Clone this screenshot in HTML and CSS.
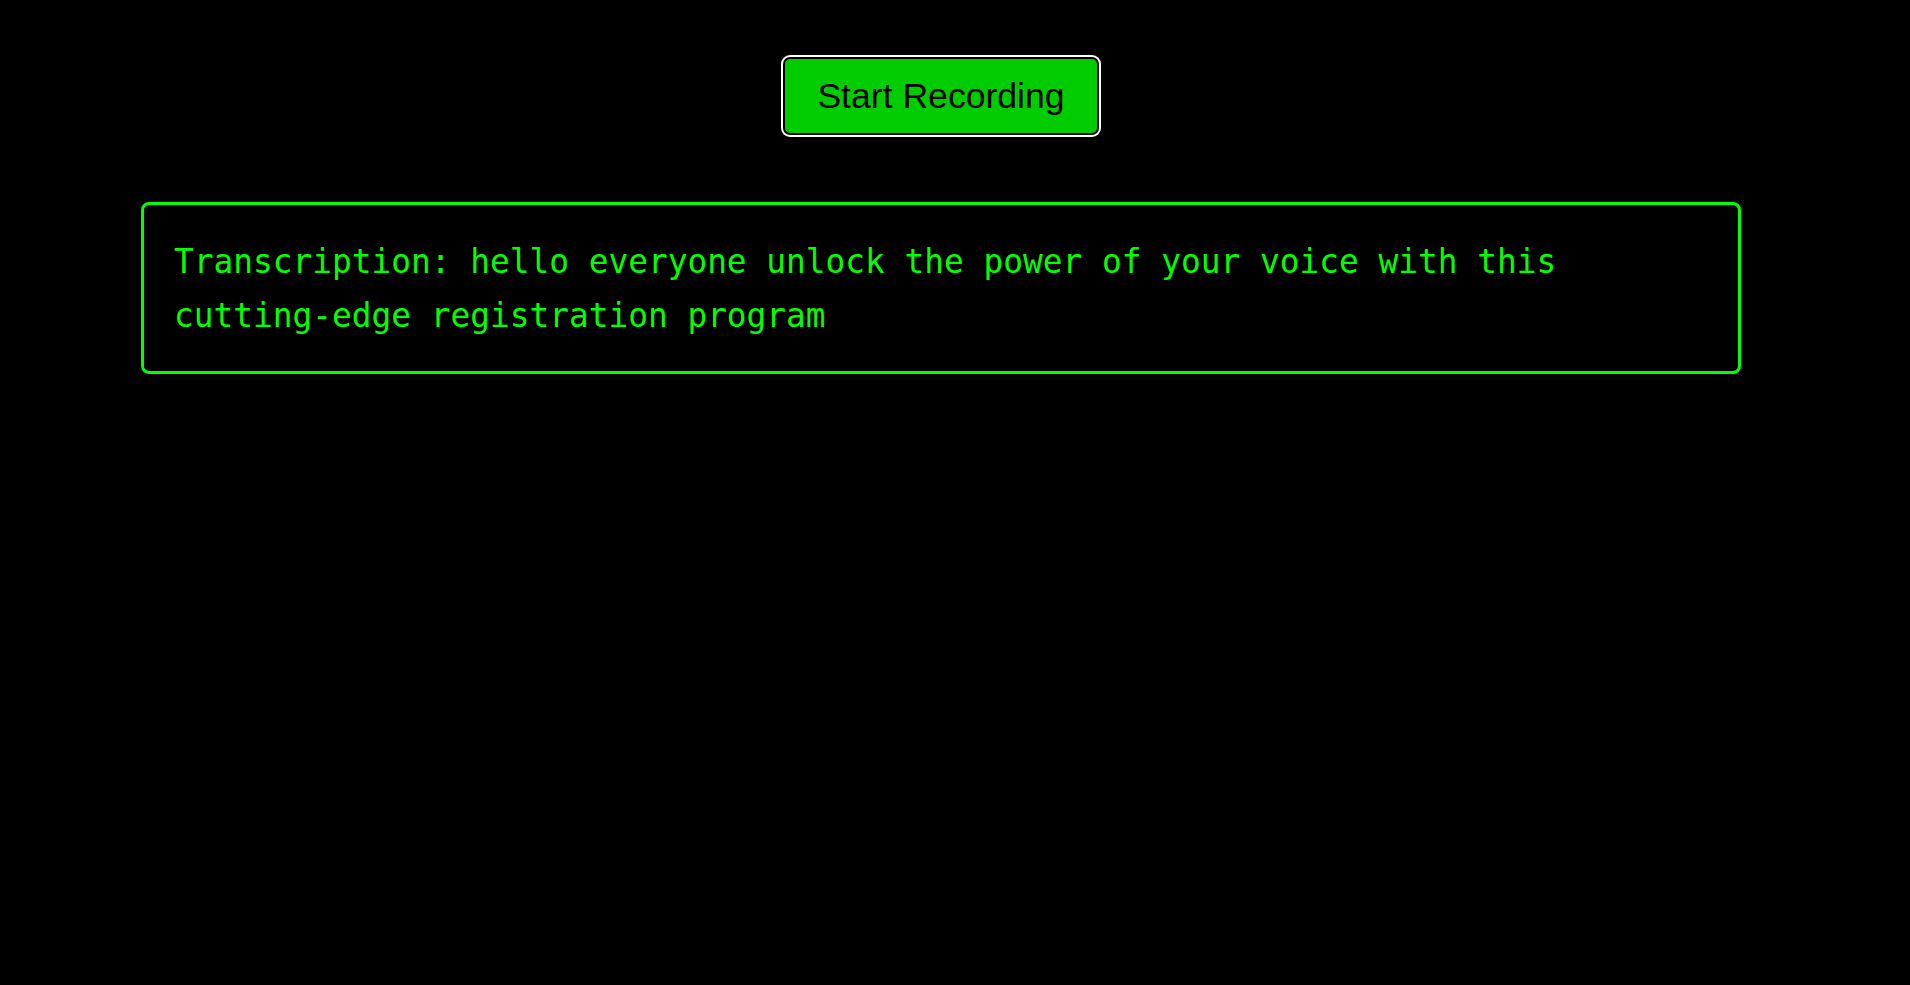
FILE: index.html
```html
<!DOCTYPE html>
<html lang="en">
<head>
<meta charset="utf-8">
<title>Speech to Text</title>
<link rel="stylesheet" href="styles.css">
</head>
<body>
<main class="page">
  <button class="record-btn" type="button">Start Recording</button>
  <div class="transcript">Transcription: hello everyone unlock the power of your voice with this cutting-edge registration program</div>
</main>
</body>
</html>
```

FILE: styles.css
```css
html, body {
  margin: 0;
  padding: 0;
  background: #000;
  height: 100%;
}
.page {
  width: 1882px;
  display: flex;
  flex-direction: column;
  align-items: center;
  padding-top: 57px;
}
.record-btn {
  font-family: "Liberation Sans", Arial, sans-serif;
  font-size: 35.6px;
  line-height: 41px;
  color: #000;
  background: #00cc00;
  border: 2px solid #000;
  border-radius: 7px;
  box-shadow: 0 0 0 2px #fff;
  padding: 16px 31px;
  width: 316px;
  height: 78px;
  box-sizing: border-box;
  cursor: pointer;
}
.transcript {
  margin-top: 67px;
  width: 1600px;
  box-sizing: border-box;
  border: 3px solid #00ff00;
  border-radius: 8px;
  padding: 30px 30px 28px;
  font-family: "DejaVu Sans Mono", "Liberation Mono", monospace;
  font-size: 32.8px;
  line-height: 54px;
  color: #00ff00;
}
```
